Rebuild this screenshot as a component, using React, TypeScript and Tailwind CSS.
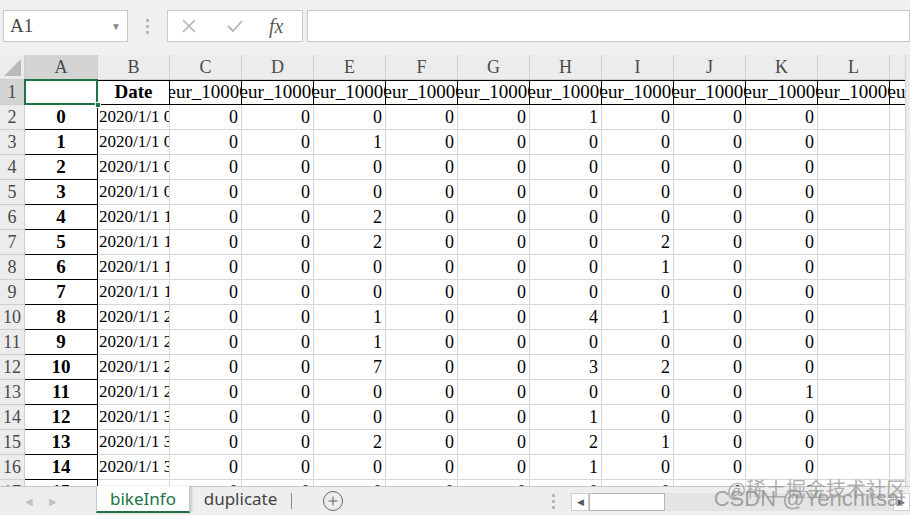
import { Plus } from "lucide-react";

const serif = { fontFamily: '"Liberation Serif", "Times New Roman", serif' };

const cols = ["A", "B", "C", "D", "E", "F", "G", "H", "I", "J", "K", "L", "M"];

// [index, hour digit, values C..K]
const rows: [number, string, number[]][] = [
  [0, "0", [0, 0, 0, 0, 0, 1, 0, 0, 0]],
  [1, "0", [0, 0, 1, 0, 0, 0, 0, 0, 0]],
  [2, "0", [0, 0, 0, 0, 0, 0, 0, 0, 0]],
  [3, "0", [0, 0, 0, 0, 0, 0, 0, 0, 0]],
  [4, "1", [0, 0, 2, 0, 0, 0, 0, 0, 0]],
  [5, "1", [0, 0, 2, 0, 0, 0, 2, 0, 0]],
  [6, "1", [0, 0, 0, 0, 0, 0, 1, 0, 0]],
  [7, "1", [0, 0, 0, 0, 0, 0, 0, 0, 0]],
  [8, "2", [0, 0, 1, 0, 0, 4, 1, 0, 0]],
  [9, "2", [0, 0, 1, 0, 0, 0, 0, 0, 0]],
  [10, "2", [0, 0, 7, 0, 0, 3, 2, 0, 0]],
  [11, "2", [0, 0, 0, 0, 0, 0, 0, 0, 1]],
  [12, "3", [0, 0, 0, 0, 0, 1, 0, 0, 0]],
  [13, "3", [0, 0, 2, 0, 0, 2, 1, 0, 0]],
  [14, "3", [0, 0, 0, 0, 0, 1, 0, 0, 0]],
  [15, "3", [0, 0, 0, 0, 0, 0, 0, 0, 0]],
];

function HeaderCell({ children, bold }: { children?: string; bold?: boolean }) {
  return (
    <div
      className={
        "box-border flex h-[25px] w-[72px] shrink-0 items-center justify-center overflow-hidden whitespace-nowrap border-r border-b border-t border-black text-[19px] text-black " +
        (bold ? "font-bold" : "")
      }
    >
      <span className="shrink-0">{children}</span>
    </div>
  );
}

function ColumnHeaders() {
  return (
    <div className="flex h-[25px] shrink-0 bg-[#ececec]" style={serif}>
      <div className="relative box-border h-[25px] w-[25px] shrink-0 border-r border-b border-[#cfcfcf]">
        <div className="absolute right-[3px] bottom-[3px] h-0 w-0 [border-bottom:17px_solid_#b9b9b9] [border-left:17px_solid_transparent]" />
      </div>
      {cols.map((c) => (
        <div
          key={c}
          className={
            "box-border flex h-[25px] shrink-0 items-center justify-center border-r border-b border-[#cfcfcf] text-[18px] text-[#4a4a4a] " +
            (c === "A" ? "w-[73px] bg-[#d4d4d4]" : "w-[72px]")
          }
        >
          {c}
        </div>
      ))}
    </div>
  );
}

function RowHeader({ n, selected }: { n: number; selected?: boolean }) {
  return (
    <div
      className={
        "box-border flex h-[25px] w-[25px] shrink-0 items-center justify-center border-r border-b border-[#cfcfcf] text-[18px] text-[#4a4a4a] " +
        (selected ? "bg-[#d4d4d4]" : "bg-[#ececec]")
      }
    >
      {n}
    </div>
  );
}

function ValueCell({ value }: { value?: number }) {
  return (
    <div className="box-border flex h-[25px] w-[72px] shrink-0 items-center justify-end border-r border-b border-[#d6d6d6] pr-[3px] text-[18px] text-black">
      {value}
    </div>
  );
}

function Sheet() {
  return (
    <div className="flex h-[431px] shrink-0 overflow-hidden">
      <div className="w-[905px] shrink-0 overflow-hidden bg-white" style={serif}>
        <ColumnHeaders />
        {/* row 1: dataframe header */}
        <div className="flex h-[25px]">
          <RowHeader n={1} selected />
          <div className="relative box-border h-[25px] w-[73px] shrink-0 border-b border-r border-black">
            <div className="absolute -top-px -left-px h-[26px] w-[74px] border-2 border-[#217346]" />
            <div className="absolute -right-[4px] -bottom-[4px] h-[6px] w-[6px] border border-white bg-[#217346]" />
          </div>
          <HeaderCell bold>Date</HeaderCell>
          {cols.slice(2).map((c) => (
            <HeaderCell key={c}>teur_10000</HeaderCell>
          ))}
        </div>
        {rows.map(([idx, hour, values], i) => (
          <div key={idx} className="flex h-[25px]">
            <RowHeader n={i + 2} />
            <div className="box-border flex h-[25px] w-[73px] shrink-0 items-center justify-center border-r border-b border-black text-[19px] font-bold text-black">
              {idx}
            </div>
            <div className="box-border flex h-[25px] w-[72px] shrink-0 items-center overflow-hidden border-r border-b border-[#d6d6d6] pl-[1px] text-[17px] text-black">
              <span className="shrink-0 whitespace-nowrap">{`2020/1/1 ${hour}:00`}</span>
            </div>
            {values.map((v, j) => (
              <ValueCell key={j} value={v} />
            ))}
            <ValueCell />
            <ValueCell />
          </div>
        ))}
      </div>
      <div className="flex-1 border-l border-[#d0d0d0] bg-[#ececec]" />
    </div>
  );
}

function TopBar() {
  return (
    <div className="flex h-[55px] shrink-0 items-start gap-0 pt-[10px] pl-[3px]">
      <div className="box-border flex h-[32px] w-[125px] items-center justify-between border border-[#c8c8c8] bg-white pr-[6px] pl-[6px]">
        <span className="text-[19px] text-[#444]" style={serif}>
          A1
        </span>
        <span className="text-[10px] text-[#8a8a8a]">▼</span>
      </div>
      <div className="flex h-[32px] w-[39px] flex-col items-center justify-center gap-[3px]">
        <div className="h-[3px] w-[3px] bg-[#b8b8b8]" />
        <div className="h-[3px] w-[3px] bg-[#b8b8b8]" />
        <div className="h-[3px] w-[3px] bg-[#b8b8b8]" />
      </div>
      <div className="box-border flex h-[32px] w-[136px] items-center border border-[#c8c8c8] bg-white">
        <svg width="16" height="16" viewBox="0 0 16 16" className="ml-[13px]">
          <path d="M2 2L14 14M14 2L2 14" stroke="#b4b4b4" strokeWidth="1.6" fill="none" />
        </svg>
        <svg width="18" height="16" viewBox="0 0 18 16" className="ml-[29px]">
          <path d="M2 8L7 13L16 3" stroke="#b4b4b4" strokeWidth="1.8" fill="none" />
        </svg>
        <span className="ml-[25px] text-[20px] italic text-[#5a5a5a]" style={serif}>
          fx
        </span>
      </div>
      <div className="ml-[4px] box-border h-[32px] flex-1 border border-[#c8c8c8] bg-white" />
    </div>
  );
}

function TabBar() {
  return (
    <div
      className="relative flex h-[29px] shrink-0 items-start border-t border-[#c6c6c6] bg-[#eeeeee]"
      style={{ fontFamily: '"Noto Sans", "Open Sans", sans-serif' }}
    >
      <div className="flex h-[28px] w-[96px] items-center gap-[16px] pl-[25px] text-[10px] text-[#c4c4c4]">
        <span>◀</span>
        <span>▶</span>
      </div>
      <div className="-mt-px box-border flex h-[27px] w-[94px] items-center justify-center border-x border-b-2 border-x-[#c6c6c6] border-b-[#217346] bg-white text-[17px] text-[#217346] shadow-[2px_0_2px_rgba(0,0,0,0.15)]">
        bikeInfo
      </div>
      <div className="flex h-[24px] w-[101px] items-center justify-center text-[17px] text-[#444]">duplicate</div>
      <div className="mt-[6px] h-[16px] w-px bg-[#8a8a8a]" />
      <div className="ml-[31px] flex h-[28px] items-center">
        <div className="flex h-[20px] w-[20px] items-center justify-center rounded-full border border-[#666]">
          <Plus size={14} strokeWidth={1.6} color="#555" />
        </div>
      </div>
      <div className="ml-[209px] flex h-[28px] flex-col items-center justify-center gap-[3px]">
        <div className="h-[3px] w-[3px] bg-[#b8b8b8]" />
        <div className="h-[3px] w-[3px] bg-[#b8b8b8]" />
        <div className="h-[3px] w-[3px] bg-[#b8b8b8]" />
      </div>
      <div className="mt-[6px] ml-[16px] flex h-[18px] flex-1">
        <div className="box-border flex h-[18px] w-[18px] items-center justify-center border border-[#d0d0d0] bg-white text-[9px] text-[#555]">
          ◀
        </div>
        <div className="box-border h-[18px] w-[76px] border border-[#b8b8b8] bg-white" />
        <div className="h-[18px] flex-1 bg-[#e4e4e4]" />
        <div className="box-border flex h-[18px] w-[17px] items-center justify-center border border-[#d0d0d0] bg-white text-[9px] text-[#555]">
          ▶
        </div>
      </div>
      {/* watermark */}
      <div
        className="pointer-events-none absolute right-[4px] -top-[8px] text-[20px] leading-none text-[#9b9b9b]/80"
        style={{ fontFamily: '"Noto Sans CJK SC", sans-serif' }}
      >
        @稀土掘金技术社区
      </div>
      <div
        className="pointer-events-none absolute right-[6px] top-[1px] text-[22px] leading-none text-[#8f8f8f]/80"
        style={{ fontFamily: '"Liberation Sans", Arial, sans-serif' }}
      >
        CSDN @Yenchitsai
      </div>
    </div>
  );
}

export default function App() {
  return (
    <div className="flex h-[515px] w-[910px] flex-col overflow-hidden bg-[#f0f0f0]">
      <TopBar />
      <Sheet />
      <TabBar />
    </div>
  );
}
